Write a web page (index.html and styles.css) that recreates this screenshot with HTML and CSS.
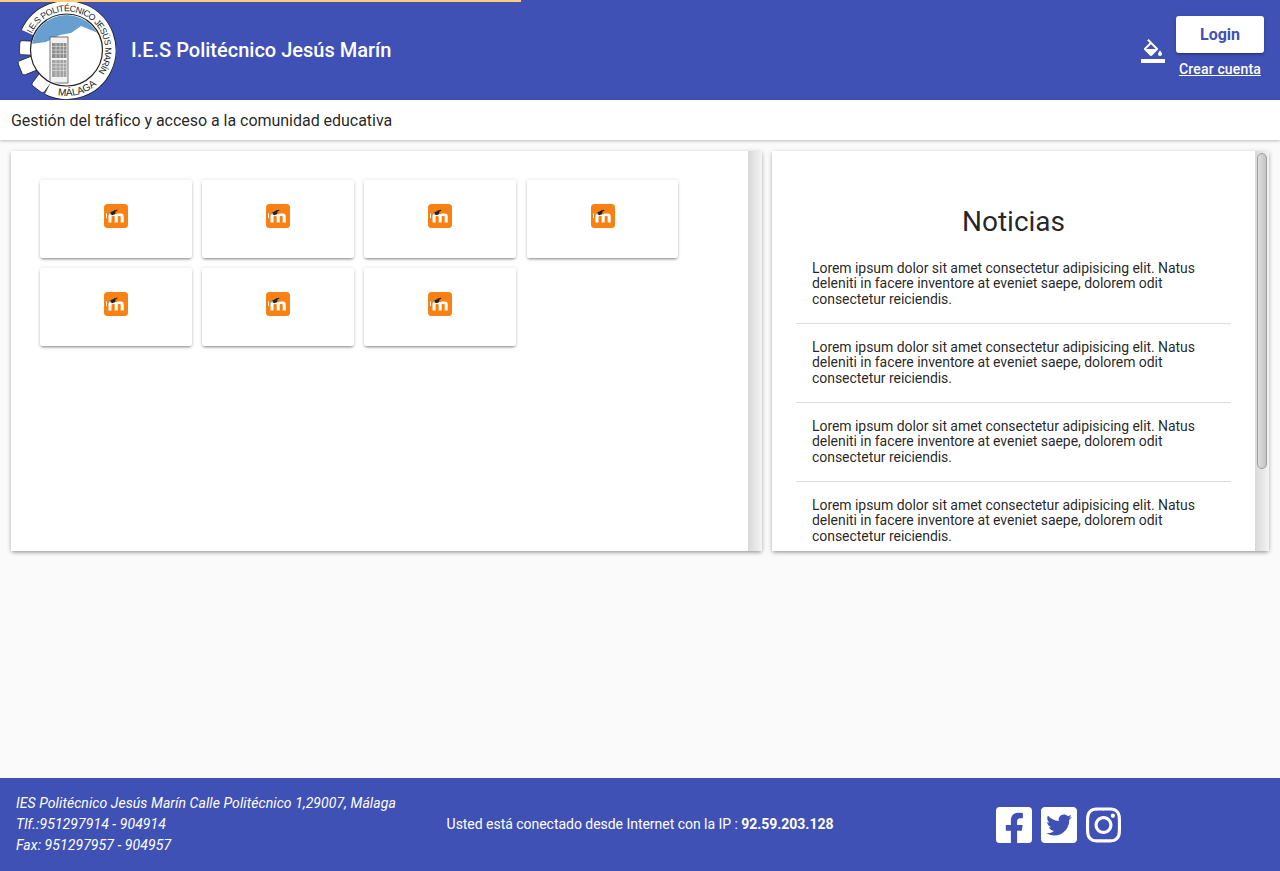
FILE: index.html
```html
<!DOCTYPE html>
<html lang="es">
<head>
<meta charset="utf-8">
<title>I.E.S Politécnico Jesús Marín</title>
<link rel="stylesheet" href="styles.css">
</head>
<body>
<svg class="defs" width="0" height="0" aria-hidden="true">
  <symbol id="moodle" viewBox="0 0 24 24">
    <rect width="24" height="24" rx="3.500" fill="#f98012"/>
    <path d="M4.500 18.500V12C4.500 10.300 5.700 9.500 7.200 9.500H9.300C10.500 9.500 11.500 9.900 12 10.600C12.500 9.900 13.500 9.500 14.700 9.500H16.800C18.500 9.500 19.700 10.300 19.700 12V18.500H16.700V12.800C16.700 12.200 16.400 12 15.900 12H14.800C14.200 12 13.700 12.300 13.700 12.900V18.500H10.700V12.800C10.700 12.200 10.400 12 9.900 12H8.500C7.900 12 7.500 12.300 7.500 12.900V18.500Z" fill="#fff"/>
    <path d="M2 9.500H3V14H2Z" fill="#fff"/>
    <path d="M6 8.500L9 7.200L10.500 6.200L13.300 5.800L13.300 6.800L11.500 7.500L11 10.200L8 11.200L6.800 10.200Z" fill="#222"/>
    <path d="M3.200 10L6.500 8.400L7.400 10.300L5.500 10.300Z" fill="#999"/>
  </symbol>
</svg>
<div class="progress"></div>
<header class="topbar">
  <svg class="logo" viewBox="0 0 100 100" role="img" aria-label="Logo">
    <g fill="#fff" stroke="#222" stroke-width=".8" transform="translate(50.5 50)">
      <rect x="22" y="-7" width="25" height="14" rx="2.500" transform="rotate(183)"/>
      <rect x="22" y="-7.500" width="28" height="15" rx="2.500" transform="rotate(158)"/>
      <rect x="22" y="-7.500" width="27" height="15" rx="2.500" transform="rotate(127)"/>
    </g>
    <path class="band-edge" d="M12.200 32.800A42 42 0 1 1 32.100 87.800"/>
    <path class="band" d="M12.200 32.800A42 42 0 1 1 32.100 87.800"/>
    <circle cx="50.500" cy="50" r="36" fill="#fff" stroke="#222" stroke-width="1.200"/>
    <clipPath id="inner"><circle cx="50.500" cy="50" r="35"/></clipPath>
    <g clip-path="url(#inner)">
      <path d="M14 10H90V36L82 33L65 26L55 33L44 35L30 42L14 44Z" fill="#669fd0"/>
      <rect x="34" y="37" width="18" height="46" fill="#f2f2f2" stroke="#555" stroke-width=".8"/>
      <rect x="36" y="43" width="14.500" height="15" fill="#8e8e8e"/>
      <rect x="36" y="60" width="14.500" height="17" fill="#a4a4a4"/>
      <path d="M36 46.500H50.500M36 50H50.500M36 53.500H50.500M40 43V58M44 43V58M47.500 43V58M36 63.500H50.500M36 67H50.500M36 70.500H50.500M40 60V77M44 60V77M47.500 60V77" stroke="#e6e6e6" stroke-width=".6"/>
    </g>
    <path id="arcTop" d="M15.700 33.700A38.500 38.500 0 1 1 75.200 79.500" fill="none"/>
    <path id="arcBottom" d="M18 82.500A46 46 0 0 0 95 61.900" fill="none"/>
    <text class="logo-text"><textPath href="#arcTop">I.E.S POLITÉCNICO JESÚS MARÍN</textPath></text>
    <text class="logo-text logo-bottom"><textPath href="#arcBottom" startOffset="50%" text-anchor="middle">MÁLAGA</textPath></text>
  </svg>
  <h1 class="title">I.E.S Politécnico Jesús Marín</h1>
  <div class="actions">
    <svg class="fill-icon" viewBox="0 0 24 24" fill="#fff"><path d="M16.560 8.940L7.620 0 6.210 1.410l2.380 2.380-5.150 5.150c-.59.59-.59 1.540 0 2.120l5.500 5.500c.29.29.68.44 1.060.44s.77-.15 1.060-.44l5.500-5.500c.59-.58.59-1.530 0-2.120zM5.210 10L10 5.210 14.790 10H5.210zM19 11.500s-2 2.170-2 3.500c0 1.100.9 2 2 2s2-.9 2-2c0-1.330-2-3.500-2-3.500z"/><path d="M0 20h24v4H0z"/></svg>
    <div class="account">
      <button class="login">Login</button>
      <a class="signup" href="#">Crear cuenta</a>
    </div>
  </div>
</header>
<div class="subbar">Gestión del tráfico y acceso a la comunidad educativa</div>
<main class="panels">
  <section class="panel">
    <div class="panel-body panel-apps">
      <div class="app-grid">
        <div class="app-card"><svg class="moodle"><use href="#moodle"/></svg></div>
        <div class="app-card"><svg class="moodle"><use href="#moodle"/></svg></div>
        <div class="app-card"><svg class="moodle"><use href="#moodle"/></svg></div>
        <div class="app-card"><svg class="moodle"><use href="#moodle"/></svg></div>
        <div class="app-card"><svg class="moodle"><use href="#moodle"/></svg></div>
        <div class="app-card"><svg class="moodle"><use href="#moodle"/></svg></div>
        <div class="app-card"><svg class="moodle"><use href="#moodle"/></svg></div>
      </div>
    </div>
    <div class="rail"></div>
  </section>
  <section class="panel">
    <div class="panel-body panel-news">
      <h2 class="news-title">Noticias</h2>
      <ul class="news-list">
        <li>Lorem ipsum dolor sit amet consectetur adipisicing elit. Natus deleniti in facere inventore at eveniet saepe, dolorem odit consectetur reiciendis.</li>
        <li>Lorem ipsum dolor sit amet consectetur adipisicing elit. Natus deleniti in facere inventore at eveniet saepe, dolorem odit consectetur reiciendis.</li>
        <li>Lorem ipsum dolor sit amet consectetur adipisicing elit. Natus deleniti in facere inventore at eveniet saepe, dolorem odit consectetur reiciendis.</li>
        <li>Lorem ipsum dolor sit amet consectetur adipisicing elit. Natus deleniti in facere inventore at eveniet saepe, dolorem odit consectetur reiciendis.</li>
      </ul>
    </div>
    <div class="rail"><div class="thumb"></div></div>
  </section>
</main>
<footer class="footer">
  <address class="contact">IES Politécnico Jesús Marín Calle Politécnico 1,29007, Málaga<br>Tlf.:951297914 - 904914<br>Fax: 951297957 - 904957</address>
  <p class="ip">Usted está conectado desde Internet con la IP : <strong>92.59.203.128</strong></p>
  <div class="social">
    <svg viewBox="0 32 448 448" fill="#fff"><path d="M400 32H48A48 48 0 0 0 0 80v352a48 48 0 0 0 48 48h137.250V327.690h-63V256h63v-54.640c0-62.150 37-96.480 93.670-96.480 27.140 0 55.520 4.840 55.520 4.840v61h-31.270c-30.810 0-40.420 19.120-40.420 38.730V256h68.780l-11 71.690h-57.780V480H400a48 48 0 0 0 48-48V80a48 48 0 0 0-48-48z"/></svg>
    <svg viewBox="0 32 448 448" fill="#fff"><path d="M400 32H48C21.500 32 0 53.500 0 80v352c0 26.500 21.500 48 48 48h352c26.500 0 48-21.500 48-48V80c0-26.500-21.500-48-48-48zm-48.900 158.800c.2 2.800.2 5.700.2 8.500 0 86.700-66 186.600-186.600 186.600-37.200 0-71.700-10.800-100.700-29.400 5.300.6 10.400.8 15.800.8 30.700 0 58.900-10.400 81.400-28-28.800-.6-53-19.500-61.300-45.500 10.100 1.500 19.200 1.500 29.600-1.200-30-6.100-52.500-32.500-52.500-64.400v-.8c8.700 4.900 18.900 7.900 29.600 8.300a65.447 65.447 0 0 1-29.200-54.600c0-12.200 3.200-23.400 8.900-33.100 32.300 39.800 80.800 65.800 135.200 68.600-9.300-44.500 24-80.600 64-80.600 18.900 0 35.900 7.900 47.900 20.700 14.800-2.800 29-8.300 41.600-15.800-4.900 15.200-15.100 28-28.600 36 13.100-1.400 25.800-5 37.500-10.100-8.900 13.100-20.100 24.700-32.900 34z"/></svg>
    <svg viewBox="0 32 448 448" fill="#fff"><path d="M224.100 141c-63.600 0-114.900 51.300-114.900 114.900s51.300 114.900 114.900 114.900S339 319.500 339 255.900 287.700 141 224.100 141zm0 189.600c-41.100 0-74.700-33.500-74.700-74.700s33.500-74.700 74.700-74.700 74.700 33.500 74.700 74.700-33.600 74.700-74.700 74.700zm146.400-194.300c0 14.900-12 26.800-26.800 26.800-14.900 0-26.800-12-26.800-26.800s12-26.800 26.800-26.800 26.800 12 26.800 26.800zm76.100 27.200c-1.700-35.900-9.900-67.700-36.200-93.900-26.200-26.200-58-34.400-93.900-36.200-37-2.100-147.900-2.100-184.900 0-35.800 1.700-67.600 9.900-93.900 36.100s-34.400 58-36.200 93.900c-2.100 37-2.100 147.900 0 184.900 1.700 35.900 9.900 67.700 36.200 93.900s58 34.400 93.900 36.200c37 2.100 147.900 2.100 184.900 0 35.900-1.700 67.700-9.900 93.900-36.200 26.200-26.200 34.400-58 36.200-93.900 2.100-37 2.100-147.800 0-184.800zM398.800 388c-7.800 19.600-22.900 34.700-42.600 42.600-29.500 11.700-99.500 9-132.100 9s-102.700 2.600-132.100-9c-19.600-7.800-34.700-22.900-42.600-42.600-11.700-29.500-9-99.500-9-132.100s-2.600-102.700 9-132.100c7.800-19.600 22.900-34.700 42.600-42.600 29.500-11.700 99.500-9 132.100-9s102.700-2.600 132.100 9c19.600 7.800 34.700 22.900 42.600 42.600 11.700 29.500 9 99.500 9 132.100s2.700 102.700-9 132.100z"/></svg>
  </div>
</footer>
</body>
</html>
```
FILE: styles.css
```css
* { box-sizing: border-box; }
html, body { margin: 0; height: 100%; }
body {
  position: relative;
  display: flex;
  flex-direction: column;
  height: 871px;
  overflow: hidden;
  background: #fafafa;
  color: rgba(0, 0, 0, .87);
  font-family: Roboto, "Liberation Sans", sans-serif;
}
.defs { position: absolute; }
.progress {
  position: absolute;
  top: 0;
  left: 0;
  z-index: 2;
  width: 521px;
  height: 2px;
  background: #ffcc80;
}
.topbar {
  display: flex;
  flex: none;
  align-items: center;
  height: 100px;
  padding-left: 16px;
  background: #3f51b5;
  color: #fff;
}
.logo { flex: none; width: 100px; height: 100px; }
.band, .band-edge { fill: none; stroke-linecap: butt; }
.band-edge { stroke: #222; stroke-width: 15.500px; }
.band { stroke: #fff; stroke-width: 14px; }
.logo-text { font: 8.800px "Liberation Sans", sans-serif; fill: #222; letter-spacing: -.55px; }
.logo-bottom { font-size: 10px; letter-spacing: 0; }
.title { margin: 0 0 0 15px; font-size: 20px; font-weight: 500; line-height: 1; }
.actions { display: flex; align-items: center; margin-left: auto; padding-right: 16px; }
.fill-icon { width: 24px; height: 24px; margin: 1px 11px 0 0; }
.account { display: flex; flex-direction: column; align-items: center; margin-bottom: 8px; }
.login {
  width: 88px;
  height: 37px;
  border: 0;
  border-radius: 3px;
  background: #fff;
  color: #3f51b5;
  box-shadow: 0 3px 1px -2px rgba(0,0,0,.2), 0 2px 2px 0 rgba(0,0,0,.14), 0 1px 5px 0 rgba(0,0,0,.12);
  font: 700 16px Roboto, sans-serif;
}
.signup { margin-top: 8px; color: #fff; font-size: 14px; font-weight: 500; line-height: 16px; letter-spacing: .15px; }
.subbar {
  flex: none;
  height: 40px;
  padding: 1px 11px 0;
  background: #fff;
  box-shadow: 0 1px 3px rgba(0,0,0,.25);
  font-size: 16px;
  letter-spacing: -.03px;
  line-height: 40px;
}
.panels {
  display: grid;
  flex: none;
  grid-template-columns: 751px 497px;
  gap: 10px;
  height: 400px;
  margin: 11px 11px 0;
}
.panel {
  display: flex;
  height: 400px;
  overflow: hidden;
  background: #fff;
  box-shadow: 0 2px 4px -1px rgba(0,0,0,.35), 0 1px 5px rgba(0,0,0,.14);
}
.panel-body { flex: 1; min-width: 0; }
.rail {
  flex: none;
  width: 14px;
  padding: 2px;
  background: linear-gradient(90deg, #d8d8d8, #f4f4f4);
}
.thumb {
  height: 316px;
  border: 1px solid #9c9c9c;
  border-radius: 5px;
  background: linear-gradient(90deg, #dedede, #c4c4c4);
}
.panel-apps { padding: 29px; }
.panel-news { padding: 0 24px; }
.app-grid {
  display: grid;
  grid-template-columns: repeat(4, 151.800px);
  gap: 10px 10.430px;
}
.app-card {
  display: flex;
  justify-content: center;
  height: 78px;
  padding-top: 24px;
  border-radius: 2px;
  background: #fff;
  box-shadow: 0 2px 3px -1px rgba(0,0,0,.45), 0 0 4px rgba(0,0,0,.12);
}
.moodle { width: 24px; height: 24px; }
.news-title {
  margin: 54px 0 0;
  font-size: 28px;
  font-weight: 400;
  line-height: 33px;
  text-align: center;
}
.news-list { margin: 7px 0 0; padding: 0; list-style: none; }
.news-list li {
  padding: 16px;
  border-bottom: 1px solid #ddd;
  font-size: 14px;
  letter-spacing: -.05px;
  line-height: 15.340px;
}
.news-list li:last-child { border-bottom: 0; }
.footer {
  display: grid;
  flex: none;
  grid-template-columns: 1fr auto 1fr;
  align-items: center;
  height: 93px;
  margin-top: auto;
  padding: 0 16px;
  background: #3f51b5;
  color: #fff;
  font-size: 14px;
}
.contact { font-style: italic; letter-spacing: .08px; line-height: 21px; }
.ip { margin: 0 0 2px; letter-spacing: -.03px; }
.social { display: flex; gap: 9px; justify-content: flex-start; padding-left: 163px; }
.social svg { display: block; width: 36px; height: 36px; }
.social svg:last-child { width: 35px; }
```
